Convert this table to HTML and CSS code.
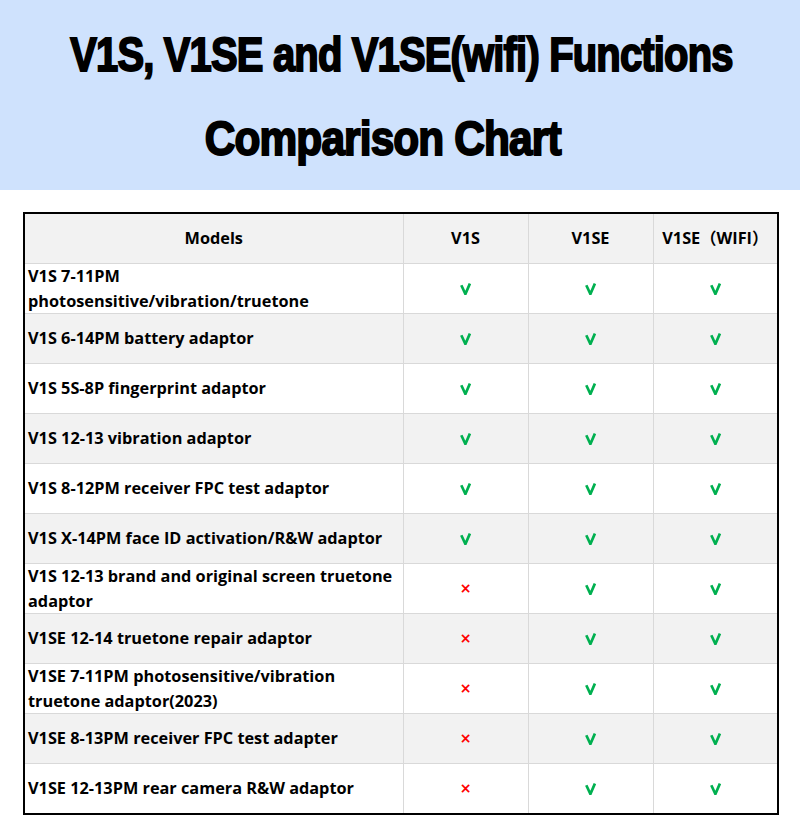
FILE: index.html
```html
<!DOCTYPE html>
<html>
<head>
<meta charset="utf-8">
<link rel="stylesheet" href="styles.css">
</head>
<body>
<svg class="defs" width="0" height="0" aria-hidden="true">
  <symbol id="ok" viewBox="0 0 11 12"><polyline points="1.3,2.2 5.4,11 9.9,0.6" fill="none" stroke="#00b050" stroke-width="2.7" stroke-linejoin="miter"/></symbol>
</svg>
<div class="banner">
  <h1 class="title"><span class="line l1">V1S, V1SE and V1SE(wifi) Functions</span><span class="line l2">Comparison Chart</span></h1>
</div>
<div class="wrap">
<table class="chart">
  <colgroup><col class="c-model"><col class="c-v"><col class="c-v"><col class="c-v"></colgroup>
  <thead>
    <tr><th class="head-model">Models</th><th>V1S</th><th>V1SE</th><th>V1SE（WIFI）</th></tr>
  </thead>
  <tbody>
    <tr><td class="model">V1S 7-11PM<br>photosensitive/vibration/truetone</td><td class="yes"><svg class="ck" role="img" aria-label="√"><use href="#ok"/></svg></td><td class="yes"><svg class="ck" role="img" aria-label="√"><use href="#ok"/></svg></td><td class="yes"><svg class="ck" role="img" aria-label="√"><use href="#ok"/></svg></td></tr>
    <tr><td class="model">V1S 6-14PM battery adaptor</td><td class="yes"><svg class="ck" role="img" aria-label="√"><use href="#ok"/></svg></td><td class="yes"><svg class="ck" role="img" aria-label="√"><use href="#ok"/></svg></td><td class="yes"><svg class="ck" role="img" aria-label="√"><use href="#ok"/></svg></td></tr>
    <tr><td class="model">V1S 5S-8P fingerprint adaptor</td><td class="yes"><svg class="ck" role="img" aria-label="√"><use href="#ok"/></svg></td><td class="yes"><svg class="ck" role="img" aria-label="√"><use href="#ok"/></svg></td><td class="yes"><svg class="ck" role="img" aria-label="√"><use href="#ok"/></svg></td></tr>
    <tr><td class="model">V1S 12-13 vibration adaptor</td><td class="yes"><svg class="ck" role="img" aria-label="√"><use href="#ok"/></svg></td><td class="yes"><svg class="ck" role="img" aria-label="√"><use href="#ok"/></svg></td><td class="yes"><svg class="ck" role="img" aria-label="√"><use href="#ok"/></svg></td></tr>
    <tr><td class="model">V1S 8-12PM receiver FPC test adaptor</td><td class="yes"><svg class="ck" role="img" aria-label="√"><use href="#ok"/></svg></td><td class="yes"><svg class="ck" role="img" aria-label="√"><use href="#ok"/></svg></td><td class="yes"><svg class="ck" role="img" aria-label="√"><use href="#ok"/></svg></td></tr>
    <tr><td class="model">V1S X-14PM face ID activation/R&amp;W adaptor</td><td class="yes"><svg class="ck" role="img" aria-label="√"><use href="#ok"/></svg></td><td class="yes"><svg class="ck" role="img" aria-label="√"><use href="#ok"/></svg></td><td class="yes"><svg class="ck" role="img" aria-label="√"><use href="#ok"/></svg></td></tr>
    <tr><td class="model">V1S 12-13 brand and original screen truetone<br>adaptor</td><td class="no">×</td><td class="yes"><svg class="ck" role="img" aria-label="√"><use href="#ok"/></svg></td><td class="yes"><svg class="ck" role="img" aria-label="√"><use href="#ok"/></svg></td></tr>
    <tr><td class="model">V1SE 12-14 truetone repair adaptor</td><td class="no">×</td><td class="yes"><svg class="ck" role="img" aria-label="√"><use href="#ok"/></svg></td><td class="yes"><svg class="ck" role="img" aria-label="√"><use href="#ok"/></svg></td></tr>
    <tr><td class="model">V1SE 7-11PM photosensitive/vibration<br>truetone adaptor(2023)</td><td class="no">×</td><td class="yes"><svg class="ck" role="img" aria-label="√"><use href="#ok"/></svg></td><td class="yes"><svg class="ck" role="img" aria-label="√"><use href="#ok"/></svg></td></tr>
    <tr><td class="model">V1SE 8-13PM receiver FPC test adapter</td><td class="no">×</td><td class="yes"><svg class="ck" role="img" aria-label="√"><use href="#ok"/></svg></td><td class="yes"><svg class="ck" role="img" aria-label="√"><use href="#ok"/></svg></td></tr>
    <tr><td class="model">V1SE 12-13PM rear camera R&amp;W adaptor</td><td class="no">×</td><td class="yes"><svg class="ck" role="img" aria-label="√"><use href="#ok"/></svg></td><td class="yes"><svg class="ck" role="img" aria-label="√"><use href="#ok"/></svg></td></tr>
  </tbody>
</table>
</div>
</body>
</html>
```
FILE: styles.css
```css
html, body {
  margin: 0;
  padding: 0;
  background: #ffffff;
}
body {
  width: 800px;
  height: 823px;
  overflow: hidden;
  font-family: "Open Sans", "Noto Sans", "Noto Sans CJK SC", sans-serif;
}
.defs {
  position: absolute;
  width: 0;
  height: 0;
  overflow: hidden;
}
.banner {
  background: #cfe2fd;
  height: 190px;
  display: flex;
  justify-content: center;
}
.title {
  margin: 0;
  padding-top: 12px;
  display: flex;
  flex-direction: column;
  align-items: center;
  font-family: "Liberation Sans", "Noto Sans CJK SC", sans-serif;
  font-weight: 700;
  font-size: 49px;
  color: #000;
  letter-spacing: -1px;
  -webkit-text-stroke: 2px #000;
}
.line {
  display: block;
  line-height: 84px;
  white-space: nowrap;
}
.l1 {
  transform: translateX(1px) scaleX(0.815);
}
.l2 {
  transform: translateX(-17px) scaleX(0.865);
}
.wrap {
  padding: 22px 0 0 23px;
}
.chart {
  border-collapse: collapse;
  width: 754px;
  table-layout: fixed;
  border: 2px solid #000;
  font-weight: 700;
  font-size: 16.3px;
  color: #000;
}
.c-model { width: 379px; }
.c-v { width: 125px; }
.chart th, .chart td {
  border: 1px solid #d9d9d9;
  height: 49px;
  padding: 0;
  text-align: center;
  vertical-align: middle;
  line-height: 24.5px;
}
.chart thead tr {
  background: #f2f2f2;
}
.chart th {
  font-weight: 700;
}
.chart tbody tr:nth-child(even) {
  background: #f2f2f2;
}
.chart td.model {
  text-align: left;
  padding-left: 3px;
}
.ck {
  display: inline-block;
  width: 11px;
  height: 12px;
  vertical-align: middle;
  position: relative;
  top: -1px;
}
.no {
  color: #ff0000;
  font-family: "DejaVu Sans", sans-serif;
  font-size: 14px;
  font-weight: 700;
}
```
